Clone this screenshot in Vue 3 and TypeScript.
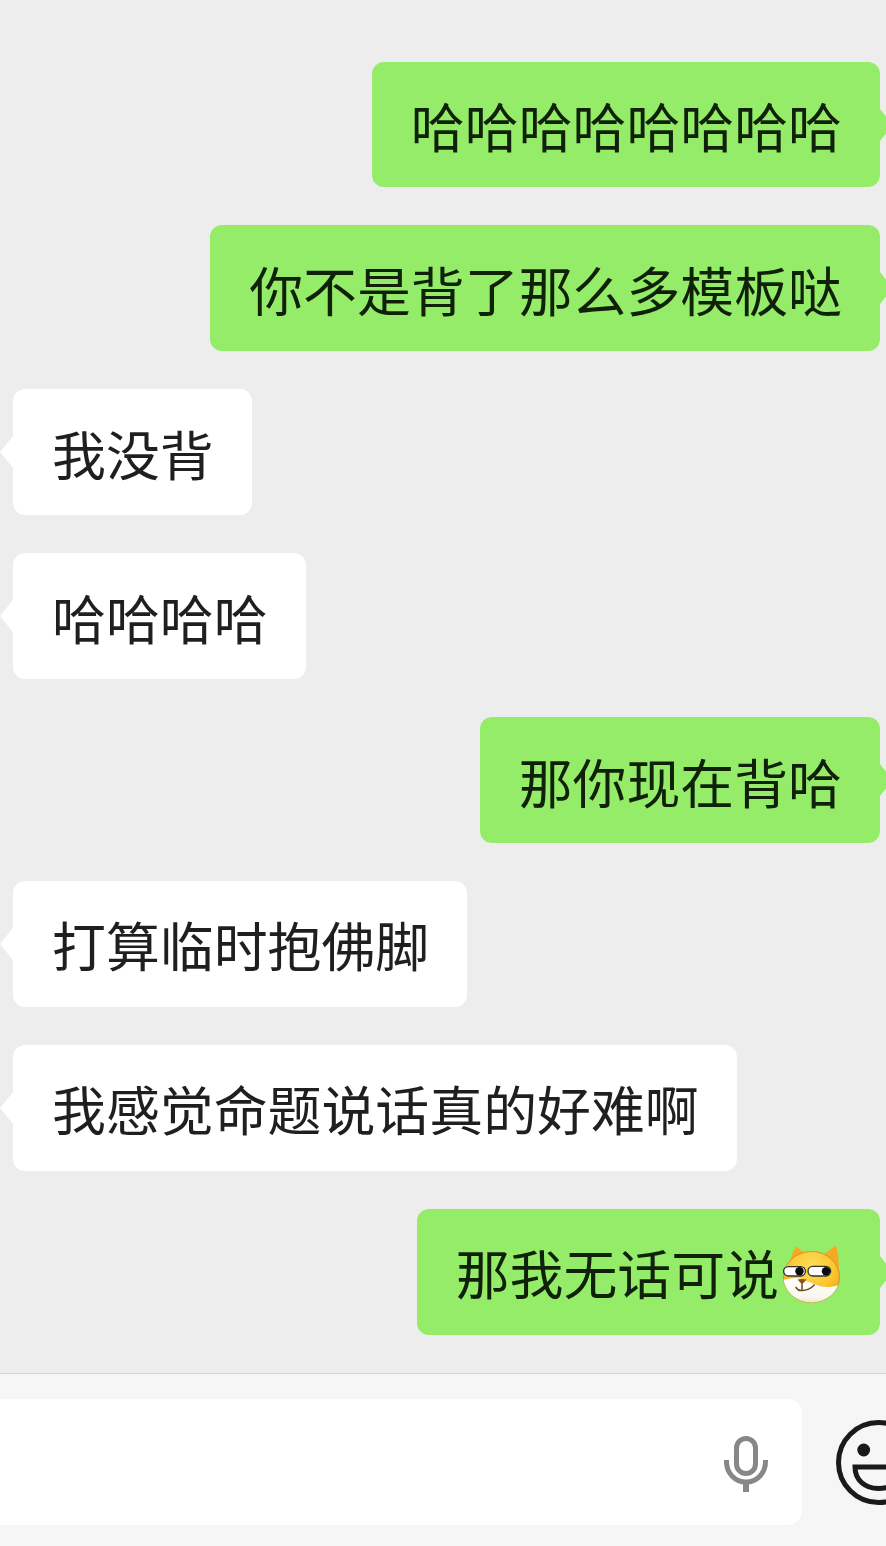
<script setup lang="ts">
interface Msg {
  text: string
  mine: boolean
  emoji?: boolean
}

const messages: Msg[] = [
  { text: '哈哈哈哈哈哈哈哈', mine: true },
  { text: '你不是背了那么多模板哒', mine: true },
  { text: '我没背', mine: false },
  { text: '哈哈哈哈', mine: false },
  { text: '那你现在背哈', mine: true },
  { text: '打算临时抱佛脚', mine: false },
  { text: '我感觉命题说话真的好难啊', mine: false },
  { text: '那我无话可说', mine: true, emoji: true },
]
</script>

<template>
  <div class="page">
    <div class="chat">
      <div v-for="(m, i) in messages" :key="i" class="row" :class="{ mine: m.mine }">
        <div class="bubble">
          <span>{{ m.text }}</span>
          <svg v-if="m.emoji" class="emoji" viewBox="0 0 62 62" aria-hidden="true">
            <defs>
              <radialGradient id="fur" cx="0.5" cy="0.3" r="0.7">
                <stop offset="0" stop-color="#ffdf5a" />
                <stop offset="0.6" stop-color="#fbc52e" />
                <stop offset="1" stop-color="#f0a31a" />
              </radialGradient>
              <linearGradient id="belly" x1="0" y1="0" x2="0" y2="1">
                <stop offset="0" stop-color="#ffffff" />
                <stop offset="0.7" stop-color="#fbf6ee" />
                <stop offset="1" stop-color="#eedcc4" />
              </linearGradient>
              <clipPath id="face">
                <ellipse cx="31.5" cy="34" rx="28" ry="25.5" />
              </clipPath>
            </defs>
            <path d="M10.5 20 Q11 11 16.2 3.5 Q22 7 26 14 Z" fill="#f6a821" />
            <path d="M40 14 Q48 8 56 2.5 Q59.5 14 58.5 30 Z" fill="#f6a821" />
            <ellipse cx="31.5" cy="34" rx="28" ry="25.5" fill="url(#fur)" stroke="#c98a2a" stroke-width="0.8" />
            <g clip-path="url(#face)">
              <path d="M0 37 C6 37 11 35 17 35 C22 35 24 38 29 39 C35 41 40 44 46 44 C52 44 56 43 62 41 L62 62 L0 62 Z" fill="url(#belly)" />
            </g>
            <rect x="3.6" y="23.6" width="21.8" height="9.4" rx="4.7" fill="#fff" stroke="#33332c" stroke-width="1.4" />
            <rect x="28" y="23.4" width="22.6" height="9.6" rx="4.8" fill="#fff" stroke="#33332c" stroke-width="1.4" />
            <circle cx="19.5" cy="28.3" r="4.2" fill="#0c0c0c" />
            <circle cx="46" cy="28.3" r="4.2" fill="#0c0c0c" />
            <path d="M17.5 36.5 Q22 35.5 26.5 36.5 L22 41.5 Z" fill="#8c4f1e" />
            <path d="M22 41.5 L22 46.5 M16 44.3 Q18 48 22 47.5 Q29 47.5 34.3 42" fill="none" stroke="#6e4a1e" stroke-width="1.5" stroke-linecap="round" />
          </svg>
          <i class="tail"></i>
        </div>
      </div>
    </div>

    <div class="footer">
      <div class="input">
        <svg class="mic" viewBox="0 0 44 56" aria-hidden="true">
          <rect x="12.5" y="2.5" width="19" height="35" rx="9.5" fill="none" stroke="#878787" stroke-width="5" />
          <path d="M2.5 24 V26 A19.5 20 0 0 0 41.5 26 V24" fill="none" stroke="#878787" stroke-width="5" />
          <path d="M22 46 V56" stroke="#878787" stroke-width="6" />
        </svg>
      </div>
      <svg class="smile" viewBox="0 0 85 85" aria-hidden="true">
        <circle cx="42.5" cy="42.5" r="40" fill="none" stroke="#1a1a1a" stroke-width="5" />
        <circle cx="27.7" cy="30" r="6.4" fill="#1a1a1a" />
        <path d="M19 47 H66 C66 60 56 68.5 42.5 68.5 C29 68.5 19 60 19 47 Z" fill="none" stroke="#1a1a1a" stroke-width="5" />
      </svg>
    </div>
  </div>
</template>

<style>
html,
body {
  margin: 0;
  background: #ededed;
}
</style>

<style scoped>
.page {
  width: 886px;
  height: 1546px;
  overflow: hidden;
  background: #ededed;
  display: flex;
  flex-direction: column;
  font-family: "Noto Sans CJK SC", "Liberation Sans", sans-serif;
}
.chat {
  flex: 1;
  display: flex;
  flex-direction: column;
  gap: 38px;
  padding: 61.5px 6px 0 13px;
}
.row {
  display: flex;
  justify-content: flex-start;
}
.row.mine {
  justify-content: flex-end;
}
.bubble {
  position: relative;
  display: flex;
  align-items: center;
  height: 125.9px;
  padding: 0 38px 0 39px;
  border-radius: 12px;
  background: #fff;
  color: #1f1f1f;
  font-size: 53.9px;
  line-height: 125px;
  white-space: nowrap;
}
.mine .bubble {
  background: #95ec69;
  color: #10210a;
}
.emoji {
  width: 62px;
  height: 62px;
  margin-top: 5px;
  margin-left: 1px;
}
.tail {
  position: absolute;
  top: 47px;
  left: -13px;
  border-top: 16px solid transparent;
  border-bottom: 16px solid transparent;
  border-right: 13px solid #fff;
}
.mine .tail {
  left: auto;
  right: -13px;
  border-right: none;
  border-left: 13px solid #95ec69;
}
.footer {
  height: 173px;
  flex-shrink: 0;
  display: flex;
  align-items: flex-start;
  gap: 34px;
  border-top: 1px solid #d4d4d4;
  background: #f6f6f6;
  padding-top: 25px;
  box-sizing: border-box;
}
.input {
  flex-shrink: 0;
  width: 822px;
  height: 126px;
  margin-left: -20px;
  border-radius: 14px;
  background: #fff;
  display: flex;
  align-items: center;
  justify-content: flex-end;
  padding-right: 34px;
  box-sizing: border-box;
}
.mic {
  width: 44px;
  height: 56px;
  margin-top: 3px;
}
.smile {
  flex-shrink: 0;
  width: 85px;
  height: 85px;
  margin-top: 21px;
}
</style>
